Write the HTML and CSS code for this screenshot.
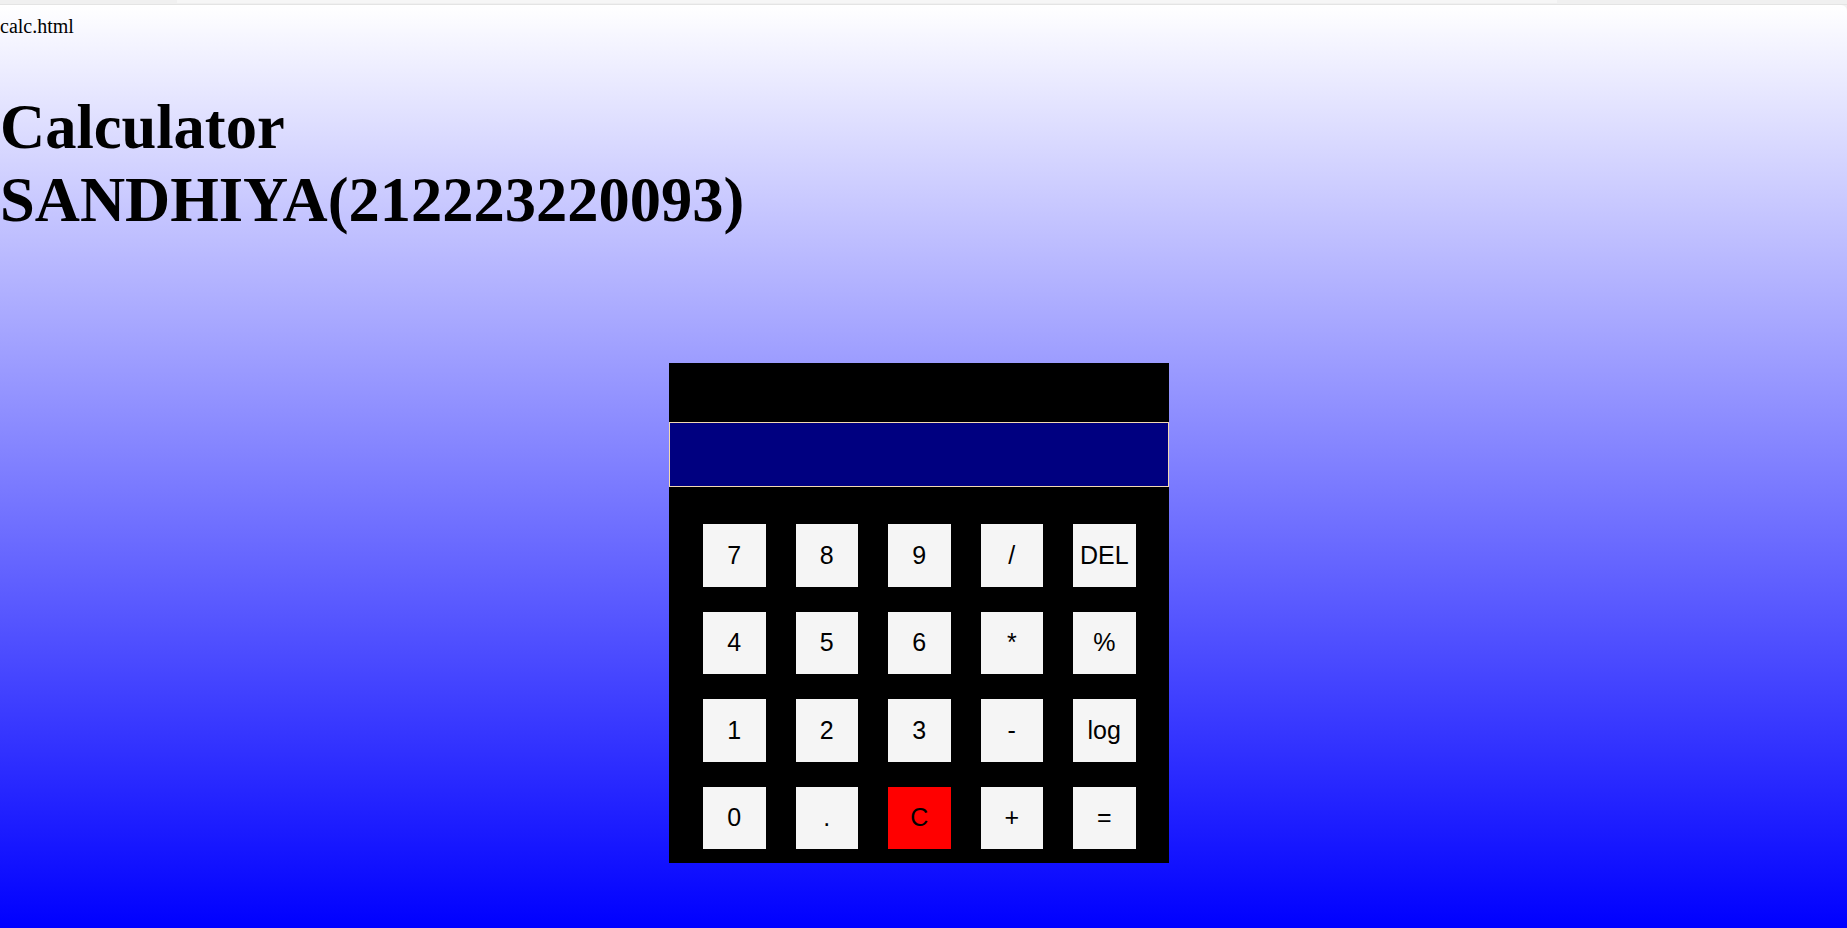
FILE: index.html
```html
<!DOCTYPE html>
<html lang="en">
<head>
<meta charset="utf-8">
<title>calc.html</title>
<link rel="stylesheet" href="styles.css">
</head>
<body>
<div class="chrome"><div class="chrome-tab"></div></div>
<div class="page">
  <div class="filename">calc.html</div>
  <h1 class="title">Calculator<br>SANDHIYA(212223220093)</h1>
  <div class="stage">
    <div class="calc">
      <div class="calc-head"></div>
      <div class="display"></div>
      <div class="keys">
        <button class="key">7</button>
        <button class="key">8</button>
        <button class="key">9</button>
        <button class="key">/</button>
        <button class="key">DEL</button>
        <button class="key">4</button>
        <button class="key">5</button>
        <button class="key">6</button>
        <button class="key">*</button>
        <button class="key">%</button>
        <button class="key">1</button>
        <button class="key">2</button>
        <button class="key">3</button>
        <button class="key">-</button>
        <button class="key">log</button>
        <button class="key">0</button>
        <button class="key">.</button>
        <button class="key key-clear">C</button>
        <button class="key">+</button>
        <button class="key">=</button>
      </div>
    </div>
  </div>
</div>
</body>
</html>
```
FILE: styles.css
```css
html, body {
  margin: 0;
  padding: 0;
  overflow: hidden;
  background: #f1f1f1;
}

.chrome {
  height: 4px;
  border-bottom: 1px solid #e4e4e4;
  background: #f0f0f0;
}

.chrome-tab {
  margin-left: 177px;
  width: 1380px;
  height: 3px;
  background: #f6f6f6;
}

.page {
  height: 923px;
  background: linear-gradient(to bottom, #ffffff 0%, #0000ff 100%);
  border-top-right-radius: 6px;
  font-family: "Liberation Serif", "Times New Roman", serif;
  color: #000;
  display: flex;
  flex-direction: column;
}

.filename {
  margin-top: 10px;
  font-size: 20px;
  line-height: 23px;
}

.title {
  margin: 53px 0 0 0;
  font-size: 62.5px;
  line-height: 73px;
  font-weight: bold;
}

.stage {
  margin-top: 126px;
  display: flex;
  justify-content: center;
  padding-right: 9px;
}

.calc {
  width: 500px;
  height: 500px;
  background: #000;
  display: flex;
  flex-direction: column;
}

.calc-head {
  height: 59px;
}

.display {
  height: 63px;
  background: #000080;
  border: 1px solid #f2d9b2;
}

.keys {
  padding: 37px 0 0 34px;
  display: grid;
  grid-template-columns: repeat(5, 62.5px);
  grid-auto-rows: 62.5px;
  column-gap: 30px;
  row-gap: 25px;
}

.key {
  margin: 0;
  padding: 0;
  border: none;
  background: #f5f5f5;
  color: #000;
  font-family: "Liberation Sans", Arial, sans-serif;
  font-size: 25px;
  line-height: 1;
  display: flex;
  align-items: center;
  justify-content: center;
}

.key-clear {
  background: #ff0000;
}
```
